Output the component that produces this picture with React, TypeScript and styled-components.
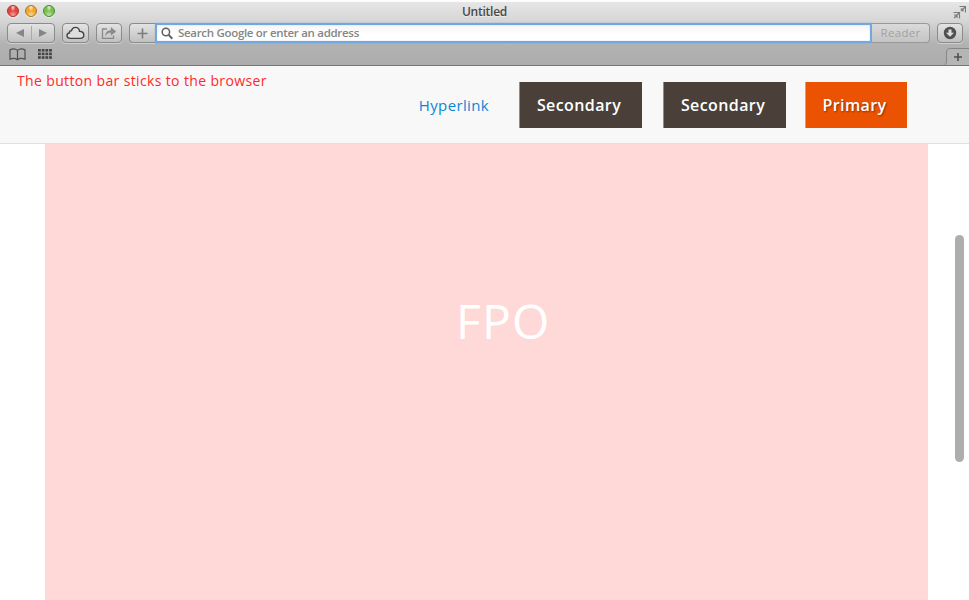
import React from 'react';
import styled, { createGlobalStyle } from 'styled-components';

const GlobalStyle = createGlobalStyle`
  * { box-sizing: border-box; }
  body { margin: 0; background: #fff; font-family: 'Open Sans', sans-serif; overflow: hidden; }
`;

const Window = styled.div`
  height: 600px;
  width: 969px;
  display: flex;
  flex-direction: column;
  overflow: hidden;
`;

const Chrome = styled.header`
  height: 66px;
  flex: none;
  border-top: 2px solid #fdfdfd;
  border-bottom: 1px solid #757575;
  background: linear-gradient(#e6e6e6, #d6d6d6 30%, #b2b2b2 67%, #acacac);
`;

const TitleBar = styled.div`
  height: 20px;
  display: grid;
  grid-template-columns: 1fr auto 1fr;
  align-items: center;
  padding: 0 3px 0 7px;
`;

const Lights = styled.div`
  display: flex;
  gap: 6px;
  margin-top: -2px;
`;

const Light = styled.span<{ $tone: string; $edge: string }>`
  width: 12px;
  height: 12px;
  border-radius: 50%;
  border: 1px solid ${(p) => p.$edge};
  background: radial-gradient(ellipse at 50% 12%, #fffc 0, rgba(255, 255, 255, 0.35) 20%, transparent 36%),
    radial-gradient(circle at 50% 90%, #fff8 0, transparent 45%), ${(p) => p.$tone};
  box-shadow: 0 1px 0 #fff8;
`;

const Title = styled.span`
  font: 600 12px/14px 'Open Sans', sans-serif;
  letter-spacing: -0.25px;
  color: #484848;
  margin-top: -1px;
  margin-right: 4px;
  text-shadow: 0 1px 0 #fff8;
`;

const Expand = styled.svg`
  justify-self: end;
`;

const Toolbar = styled.div`
  height: 22px;
  display: flex;
  align-items: center;
  padding: 0 6px 0 7px;
`;

const ToolButton = styled.span<{ $w: number; $gap: number; $flat?: boolean }>`
  width: ${(p) => p.$w}px;
  height: 20px;
  margin-right: ${(p) => p.$gap}px;
  border: 1px solid #8b8b8b;
  border-right-width: ${(p) => (p.$flat ? 0 : 1)}px;
  border-radius: ${(p) => (p.$flat ? '4px 0 0 4px' : '4px')};
  background: linear-gradient(#e3e3e3, #c1c1c1);
  box-shadow: 0 1px 0 #d0d0d0;
  display: flex;
  align-items: center;
  justify-content: center;
`;

const Address = styled.div`
  width: 718px;
  height: 20px;
  border: 2px solid #70a8df;
  box-shadow: 0 0 1px #70a8df, inset 0 0 1px #70a8df;
  background: linear-gradient(#f5f5f5, #fff 60%);
  display: flex;
  align-items: center;
  padding-left: 4px;
  gap: 5px;
  font: 600 11.5px/16px 'Open Sans', sans-serif;
  letter-spacing: -0.3px;
  color: #868686;
  white-space: nowrap;
`;

const Reader = styled.span`
  width: 58px;
  height: 20px;
  margin-right: 7px;
  border: 1px solid #999;
  border-left: 0;
  border-radius: 0 4px 4px 0;
  background: linear-gradient(#dadada, #c4c4c4);
  display: flex;
  justify-content: center;
  font: 500 11.5px/18px 'Open Sans', sans-serif;
  letter-spacing: 0.3px;
  color: #a2a2a2;
`;

const Bookmarks = styled.div`
  height: 21px;
  display: flex;
  align-items: flex-start;
  padding-left: 9px;
  gap: 11px;
`;

const BookmarkIcon = styled.svg`
  margin-top: 4px;
`;

const NewTab = styled.svg`
  margin: 4px 0 0 auto;
`;

const ButtonBar = styled.nav`
  height: 78px;
  flex: none;
  background: #f8f8f8;
  border-bottom: 1px solid #e0e0e0;
  display: flex;
  align-items: flex-start;
  padding: 0 62px 0 17px;
`;

const Note = styled.p`
  margin: 5px auto 0 0;
  font-size: 14px;
  line-height: 20px;
  letter-spacing: 0.36px;
  color: #ff2a2a;
  white-space: nowrap;
`;

const Link = styled.a`
  margin: 28px 30px 0 0;
  font-size: 15px;
  line-height: 22px;
  letter-spacing: 0.36px;
  color: #0b86d6;
`;

const Button = styled.button<{ $w: number; $gap?: number; $primary?: boolean }>`
  width: ${(p) => p.$w}px;
  height: 46px;
  margin: 16px ${(p) => p.$gap ?? 0}px 0 0;
  padding: 0 4px 0 0;
  border: 0;
  border-left: 1px solid ${(p) => (p.$primary ? '#f5945f' : '#948c88')};
  background: ${(p) => (p.$primary ? '#eb5202' : '#4a3f39')};
  color: #fff;
  font: 600 16px/46px 'Open Sans', sans-serif;
  letter-spacing: 0.4px;
  text-shadow: ${(p) => (p.$primary ? '1px 1px 2px #0006' : 'none')};
`;

const Page = styled.main`
  flex: 1;
  display: flex;
  justify-content: space-between;
  padding: 0 5px 0 45px;
  background: #fff;
`;

const Placeholder = styled.div`
  width: 883px;
  background: #ffd8d8;
  color: #fff;
  padding: 144px 0 0 411px;
  font-size: 48px;
  line-height: 66px;
  letter-spacing: 1.2px;
`;

const Scrollbar = styled.div`
  width: 9px;
  height: 227px;
  margin-top: 91px;
  border-radius: 5px;
  background: #adadad;
`;

export default function App() {
  return (
    <Window>
      <GlobalStyle />
      <Chrome>
        <TitleBar>
          <Lights>
            <Light $tone="#e5423e" $edge="#a93733" />
            <Light $tone="#efa72c" $edge="#ad7422" />
            <Light $tone="#78c04c" $edge="#4c8836" />
          </Lights>
          <Title>Untitled</Title>
          <Expand width="13" height="14" viewBox="0 0 13 14" fill="none" stroke="#7c7c7c" strokeWidth="1.2">
            <path d="M6.500 1.500h6v6M12.500 1.500 8 6M7.500 4h2.500v2.500M.5 7.500h6v6M6.500 7.500 1 13M1 10h3v3" />
          </Expand>
        </TitleBar>
        <Toolbar>
          <ToolButton $w={48} $gap={7}>
            <svg width="46" height="18" fill="#858585">
              <path d="M16 5v8L8 9zM31 5v8l8-4z" />
              <path d="M23.5 2v14" stroke="#aaa" />
            </svg>
          </ToolButton>
          <ToolButton $w={27} $gap={7}>
            <svg width="19" height="14" viewBox="0 0 19 14" fill="#dedede" stroke="#444" strokeWidth="1.4">
              <path d="M4.500 12.400C2.300 12.400 1 11.300 1 9.600c0-1.500 1-2.400 2.500-2.600C3.200 5.500 4 4.500 5.400 4.700 6 2.600 7.400 1.400 9.300 1.400c2.300 0 4 1.500 4.200 3.900 2.500.2 4.300 1.500 4.300 3.700 0 2-1.500 3.400-3.600 3.400z" />
            </svg>
          </ToolButton>
          <ToolButton $w={26} $gap={7}>
            <svg width="16" height="14" viewBox="0 0 16 14" fill="none" stroke="#8a8a8a" strokeWidth="1.3">
              <path d="M6 3H1.500v9.300h11V9.500" />
              <path d="M4.500 9.500C4.600 6 6.500 4.400 10 4.400V1.500l5 4-5 3.700V6.600C7.500 6.500 6 7.300 4.500 9.500z" fill="#8a8a8a" strokeWidth=".4" />
            </svg>
          </ToolButton>
          <ToolButton $w={26} $gap={0} $flat>
            <svg width="11" height="11" stroke="#7c7c7c" strokeWidth="1.6">
              <path d="M5.500 .5v10M.5 5.500h10" />
            </svg>
          </ToolButton>
          <Address>
            <svg width="12" height="13" viewBox="0 0 12 13" fill="none" stroke="#606060" strokeWidth="1.5">
              <circle cx="4.9" cy="5" r="3.7" />
              <path d="m7.700 7.900 3.600 3.800" strokeWidth="2" />
            </svg>
            <span>Search Google or enter an address</span>
          </Address>
          <Reader>Reader</Reader>
          <ToolButton $w={26} $gap={0}>
            <svg width="14" height="14">
              <circle cx="7" cy="7" r="6.2" fill="#505050" />
              <path d="M5.500 3.500h3v3.200H11L7 10.800 3 6.700h2.500z" fill="#ddd" />
            </svg>
          </ToolButton>
        </Toolbar>
        <Bookmarks>
          <BookmarkIcon width="17" height="13" viewBox="0 0 17 13" fill="none" stroke="#505050" strokeWidth="1.2">
            <path d="M8.500 2.400C6.600.8 3.500.7 1 1.900v9.300c2.700-1.100 5.500-1.100 7.500.5 2-1.600 4.800-1.600 7.500-.5V1.900C13.500.7 10.400.8 8.500 2.400zv9.300" />
          </BookmarkIcon>
          <BookmarkIcon width="16" height="12" fill="#454545">
            {[0, 1, 2].map((r) =>
              [0, 1, 2, 3].map((c) => <rect key={`${r}-${c}`} x={1 + c * 3.7} y={1 + r * 3.6} width="2.8" height="2.6" />)
            )}
          </BookmarkIcon>
          <NewTab width="26" height="17">
            <path d="M0 17.500C4.500 17.500 3.500 12 3.500 5c0-3 1-4.500 4-4.500H27V17.500z" fill="#b5b5b5" stroke="#858585" />
            <path d="M15 5v8M11 9h8" stroke="#505050" strokeWidth="1.6" />
          </NewTab>
        </Bookmarks>
      </Chrome>
      <ButtonBar>
        <Note>The button bar sticks to the browser</Note>
        <Link>Hyperlink</Link>
        <Button $w={123} $gap={21}>Secondary</Button>
        <Button $w={123} $gap={19}>Secondary</Button>
        <Button $w={102} $primary>Primary</Button>
      </ButtonBar>
      <Page>
        <Placeholder>FPO</Placeholder>
        <Scrollbar />
      </Page>
    </Window>
  );
}
